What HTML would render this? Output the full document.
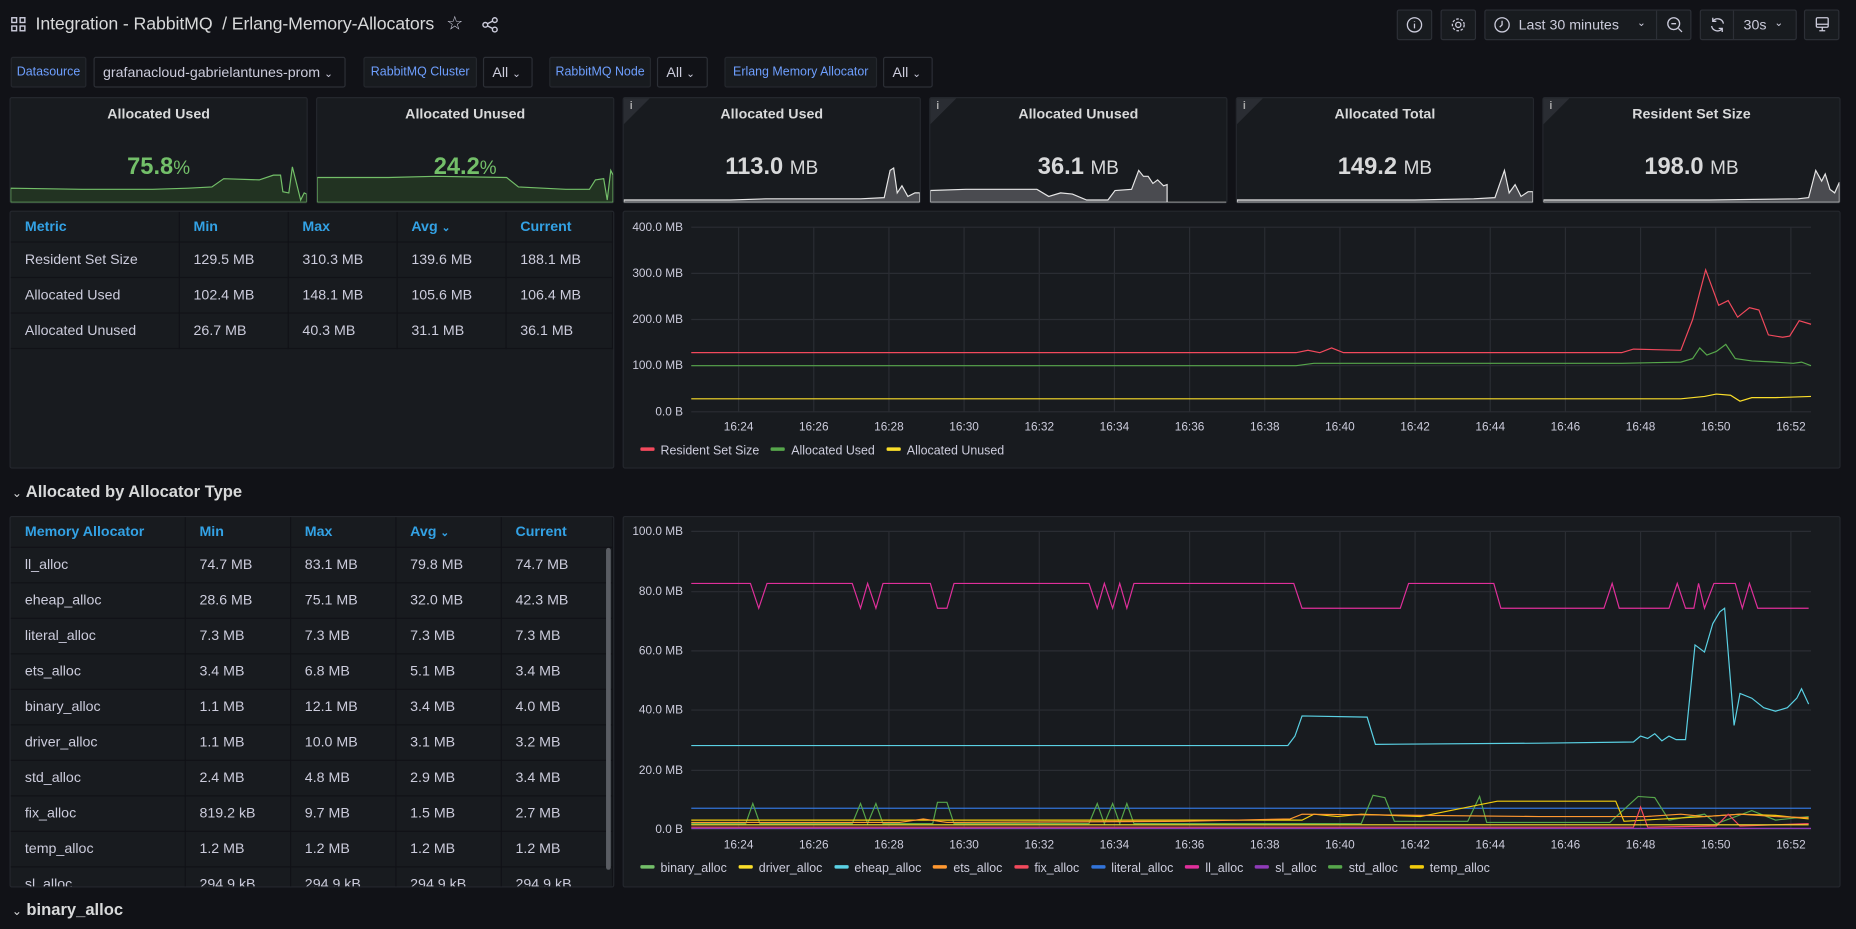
<!DOCTYPE html>
<html><head><meta charset="utf-8">
<style>
*{box-sizing:border-box;margin:0;padding:0}
html,body{width:1856px;height:929px;overflow:hidden;background:#111217}
.root{position:absolute;left:0;top:0;width:1568px;height:785px;transform:scale(1.18367,1.1834);transform-origin:0 0;font-family:"Liberation Sans",sans-serif;color:#ccccdc;font-size:12px}
.a{position:absolute}
.panel{position:absolute;background:#181b1f;border:1px solid #24272d;border-radius:2px}
.btn{position:absolute;top:8px;height:26px;background:#181b1f;border:1px solid #2c2f36;border-radius:2px}
.lab{position:absolute;top:48px;height:26px;background:#181b1f;border:1px solid #24272d;color:#6e9fff;font-size:10.5px;line-height:25px;text-align:center;border-radius:2px}
.dd{position:absolute;top:48px;height:26px;background:#111217;border:1px solid #2c2f36;color:#ccccdc;font-size:12px;line-height:25px;padding-left:7px;border-radius:2px}
.st{top:82px;height:90px}
.st .t{position:absolute;top:6px;left:0;right:0;text-align:center;font-weight:bold;font-size:12px;color:#d8d9da}
.st .v{position:absolute;top:47px;left:0;right:0;text-align:center;font-size:20px;font-weight:bold;color:#d8d9da}
.st .v small{font-size:16px;font-weight:normal}
.st svg{position:absolute;left:0;bottom:0}
.info{position:absolute;left:0;top:0;width:0;height:0;border-top:22px solid #2a2d33;border-right:22px solid transparent}
.info:after{content:"i";position:absolute;left:5px;top:-21px;font-size:9px;color:#aaa;font-weight:bold}
table{border-collapse:collapse;position:absolute;left:0;top:0;width:100%}
td,th{height:30px;padding-left:12px;text-align:left;font-size:12px;color:#ccccdc;font-weight:normal;border-right:1px solid #111217;border-bottom:1px solid #111217}
th{height:25px;color:#33a2e5;font-weight:bold;font-size:12px}
.row{position:absolute;left:10px;font-size:14px;font-weight:bold;color:#d8d9da}
.ax{font-size:10px;fill:#ccccdc;font-family:"Liberation Sans",sans-serif}
.leg{position:absolute;font-size:10.5px;color:#ccccdc;white-space:nowrap}
.leg i{display:inline-block;width:12px;height:3px;margin:0 5px 3px 0;vertical-align:middle;border-radius:1px}
.leg span{margin-right:10px}
</style></head><body><div class="root">

<!-- header -->
<svg class="a" style="left:9px;top:14px" width="13" height="13" viewBox="0 0 13 13" fill="none" stroke="#ccccdc" stroke-width="1.2"><rect x="1" y="1" width="4" height="4"/><rect x="8" y="1" width="4" height="4"/><rect x="1" y="8" width="4" height="4"/><rect x="8" y="8" width="4" height="4"/></svg>
<div class="a" style="left:30px;top:12px;font-size:15px;color:#d8d9da;letter-spacing:-0.1px">Integration - RabbitMQ&nbsp; / Erlang-Memory-Allocators</div>
<div class="a" style="left:377px;top:10px;font-size:16px;color:#ccccdc">☆</div>
<svg class="a" style="left:407px;top:14px" width="14" height="14" viewBox="0 0 14 14" fill="none" stroke="#ccccdc" stroke-width="1.2"><circle cx="11" cy="3" r="2"/><circle cx="3" cy="7" r="2"/><circle cx="11" cy="11" r="2"/><path d="M5 6l4-2M5 8l4 2"/></svg>

<div class="btn" style="left:1180px;width:30px"><svg style="position:absolute;left:7px;top:5px" width="14" height="14" viewBox="0 0 14 14" fill="none" stroke="#ccccdc" stroke-width="1.1"><circle cx="7" cy="7" r="6"/><path d="M7 6v4M7 4v.5"/></svg></div>
<div class="btn" style="left:1217px;width:30px"><svg style="position:absolute;left:7px;top:5px" width="14" height="14" viewBox="0 0 14 14" fill="none" stroke="#ccccdc" stroke-width="1.1"><circle cx="7" cy="7" r="2.2"/><circle cx="7" cy="7" r="5" stroke-dasharray="2.2 1.4"/></svg></div>
<div class="btn" style="left:1254px;width:175px"><svg style="position:absolute;left:7px;top:5px" width="14" height="14" viewBox="0 0 14 14" fill="none" stroke="#ccccdc" stroke-width="1.1"><circle cx="7" cy="7" r="6"/><path d="M7 3.5V7L5 9"/></svg><span style="position:absolute;left:28px;top:5px;font-size:12px">Last 30 minutes</span><span style="position:absolute;left:128px;top:5px;font-size:9px">⌄</span><div style="position:absolute;left:144px;top:0;width:1px;height:24px;background:#2c2f36"></div><svg style="position:absolute;left:153px;top:5px" width="14" height="14" viewBox="0 0 14 14" fill="none" stroke="#ccccdc" stroke-width="1.1"><circle cx="6" cy="6" r="5"/><path d="M4 6h4M10 10l3 3"/></svg></div>
<div class="btn" style="left:1436px;width:82px"><svg style="position:absolute;left:7px;top:5px" width="14" height="14" viewBox="0 0 14 14" fill="none" stroke="#ccccdc" stroke-width="1.1"><path d="M12 6A5 5 0 0 0 3 4M2 8a5 5 0 0 0 9 2M3 1v3h3M11 13v-3H8"/></svg><div style="position:absolute;left:27px;top:0;width:1px;height:24px;background:#2c2f36"></div><span style="position:absolute;left:36px;top:5px;font-size:12px">30s</span><span style="position:absolute;left:62px;top:5px;font-size:9px">⌄</span></div>
<div class="btn" style="left:1524px;width:30px"><svg style="position:absolute;left:8px;top:5px" width="13" height="14" viewBox="0 0 13 14" fill="none" stroke="#ccccdc" stroke-width="1.1"><rect x="1.5" y="1" width="10" height="8" rx="1"/><path d="M1.5 6.5h10M4 12h5M6.5 9v3"/></svg></div>

<!-- variables -->
<div class="lab" style="left:9px;width:64px">Datasource</div>
<div class="dd" style="left:79px;width:213px">grafanacloud-gabrielantunes-prom <span style="font-size:9px">⌄</span></div>
<div class="lab" style="left:307px;width:96px">RabbitMQ Cluster</div>
<div class="dd" style="left:408px;width:42px">All <span style="font-size:9px">⌄</span></div>
<div class="lab" style="left:464px;width:86px">RabbitMQ Node</div>
<div class="dd" style="left:555px;width:43px">All <span style="font-size:9px">⌄</span></div>
<div class="lab" style="left:612px;width:129px">Erlang Memory Allocator</div>
<div class="dd" style="left:746px;width:42px">All <span style="font-size:9px">⌄</span></div>

<!-- stat panels -->
<div class="panel st" style="left:8px;width:252px"><div class="t">Allocated Used</div><div class="v" style="color:#73bf69">75.8<small>%</small></div>
<svg width="250" height="32" viewBox="0 0 250 32"><path d="M0 20 L60 21 L120 21 L150 20 L170 19 L180 12 L210 13 L222 9 L228 9 L230 23 L235 24 L238 2 L242 18 L245 30 L248 24 L250 25 L250 32 L0 32Z" fill="#223322" stroke="#73bf69" stroke-width="1"/></svg></div>
<div class="panel st" style="left:267px;width:252px"><div class="info" style="display:none"></div><div class="t">Allocated Unused</div><div class="v" style="color:#73bf69">24.2<small>%</small></div>
<svg width="250" height="32" viewBox="0 0 250 32"><path d="M0 11 L60 11 L100 10 L160 11 L170 19 L210 21 L230 21 L235 13 L242 12 L245 30 L248 5 L250 9 L250 32 L0 32Z" fill="#223322" stroke="#73bf69" stroke-width="1"/></svg></div>
<div class="panel st" style="left:526px;width:252px"><div class="info"></div><div class="t">Allocated Used</div><div class="v">113.0 <small>MB</small></div>
<svg width="250" height="32" viewBox="0 0 250 32"><path d="M0 30 L90 30 L120 29 L200 29 L220 28 L225 5 L228 3 L231 24 L235 18 L240 27 L246 24 L250 24 L250 32 L0 32Z" fill="#4a4b50" stroke="#e6e6e6" stroke-width="1"/></svg></div>
<div class="panel st" style="left:785px;width:252px"><div class="info"></div><div class="t">Allocated Unused</div><div class="v">36.1 <small>MB</small></div>
<svg width="250" height="32" viewBox="0 0 250 32"><path d="M0 22 L30 21 L90 21 L100 27 L110 24 L120 25 L132 30 L150 30 L156 22 L170 21 L176 5 L180 10 L184 10 L188 16 L192 13 L197 18 L200 17 L200 32 L250 32 L0 32Z" fill="#4a4b50" stroke="#e6e6e6" stroke-width="1"/></svg></div>
<div class="panel st" style="left:1044px;width:252px"><div class="info"></div><div class="t">Allocated Total</div><div class="v">149.2 <small>MB</small></div>
<svg width="250" height="32" viewBox="0 0 250 32"><path d="M0 30 L150 30 L200 29 L218 28 L226 5 L230 24 L235 17 L240 27 L246 23 L250 23 L250 32 L0 32Z" fill="#4a4b50" stroke="#e6e6e6" stroke-width="1"/></svg></div>
<div class="panel st" style="left:1303px;width:252px"><div class="info"></div><div class="t">Resident Set Size</div><div class="v">198.0 <small>MB</small></div>
<svg width="250" height="32" viewBox="0 0 250 32"><path d="M0 30 L140 30 L215 29 L224 28 L230 5 L235 14 L238 8 L242 21 L246 24 L250 15 L250 32 L0 32Z" fill="#4a4b50" stroke="#e6e6e6" stroke-width="1"/></svg></div>

<!-- table 1 -->
<div class="panel" style="left:8px;top:178px;width:511px;height:218px;overflow:hidden">
<table><tr><th style="width:142px">Metric</th><th style="width:92px">Min</th><th style="width:92px">Max</th><th style="width:92px">Avg <span style="font-size:9px">⌄</span></th><th>Current</th></tr>
<tr><td>Resident Set Size</td><td>129.5 MB</td><td>310.3 MB</td><td>139.6 MB</td><td>188.1 MB</td></tr>
<tr><td>Allocated Used</td><td>102.4 MB</td><td>148.1 MB</td><td>105.6 MB</td><td>106.4 MB</td></tr>
<tr><td>Allocated Unused</td><td>26.7 MB</td><td>40.3 MB</td><td>31.1 MB</td><td>36.1 MB</td></tr></table></div>

<!-- graph 1 -->
<div class="panel" style="left:526px;top:178px;width:1029px;height:218px"></div>
<svg class="a" style="left:526px;top:178px" width="1029" height="218">
<g transform="translate(-526,-178)" stroke="#2a2d33" stroke-width="1">
<path d="M584 192H1530M584 231H1530M584 270H1530M584 309H1530M584 348H1530"/>
<path d="M624 192V348M687.5 192V348M751 192V348M814.5 192V348M878 192V348M941.5 192V348M1005 192V348M1068.5 192V348M1132 192V348M1195.5 192V348M1259 192V348M1322.5 192V348M1386 192V348M1449.5 192V348M1513 192V348"/>
</g>
<g transform="translate(-526,-178)" class="ax">
<text x="577" y="195" text-anchor="end">400.0 MB</text><text x="577" y="234" text-anchor="end">300.0 MB</text><text x="577" y="273" text-anchor="end">200.0 MB</text><text x="577" y="312" text-anchor="end">100.0 MB</text><text x="577" y="351" text-anchor="end">0.0 B</text>
<g text-anchor="middle"><text x="624" y="364">16:24</text><text x="687.5" y="364">16:26</text><text x="751" y="364">16:28</text><text x="814.5" y="364">16:30</text><text x="878" y="364">16:32</text><text x="941.5" y="364">16:34</text><text x="1005" y="364">16:36</text><text x="1068.5" y="364">16:38</text><text x="1132" y="364">16:40</text><text x="1195.5" y="364">16:42</text><text x="1259" y="364">16:44</text><text x="1322.5" y="364">16:46</text><text x="1386" y="364">16:48</text><text x="1449.5" y="364">16:50</text><text x="1513" y="364">16:52</text></g>
<polyline fill="none" stroke="#f2495c" stroke-width="1" points="584,298 1095,298 1105,296 1115,298 1125,294 1135,298 1370,298 1380,295 1420,296 1430,270 1441,228 1452,258 1460,254 1468,268 1478,260 1486,262 1494,283 1506,285 1512,284 1520,271 1530,274"/>
<polyline fill="none" stroke="#56a64b" stroke-width="1" points="584,309 1095,309 1110,307 1370,307 1420,306 1430,303 1436,294 1442,300 1450,297 1458,291 1466,303 1480,305 1500,306 1515,307 1522,306 1530,309"/>
<polyline fill="none" stroke="#fade2a" stroke-width="1" points="584,337 1420,337 1440,335 1450,333 1462,334 1470,339 1480,336 1500,336 1530,335"/>
</g></svg>
<div class="leg" style="left:541px;top:375px"><i style="background:#f2495c"></i><span>Resident Set Size</span><i style="background:#56a64b"></i><span>Allocated Used</span><i style="background:#fade2a"></i><span>Allocated Unused</span></div>

<!-- row -->
<div class="row" style="top:407px"><span style="font-size:10px;font-weight:normal">⌄</span> Allocated by Allocator Type</div>

<!-- table 2 -->
<div class="panel" style="left:8px;top:436px;width:511px;height:314px;overflow:hidden">
<table><tr><th style="width:147px">Memory Allocator</th><th style="width:89px">Min</th><th style="width:89px">Max</th><th style="width:89px">Avg <span style="font-size:9px">⌄</span></th><th>Current</th></tr>
<tr><td>ll_alloc</td><td>74.7 MB</td><td>83.1 MB</td><td>79.8 MB</td><td>74.7 MB</td></tr>
<tr><td>eheap_alloc</td><td>28.6 MB</td><td>75.1 MB</td><td>32.0 MB</td><td>42.3 MB</td></tr>
<tr><td>literal_alloc</td><td>7.3 MB</td><td>7.3 MB</td><td>7.3 MB</td><td>7.3 MB</td></tr>
<tr><td>ets_alloc</td><td>3.4 MB</td><td>6.8 MB</td><td>5.1 MB</td><td>3.4 MB</td></tr>
<tr><td>binary_alloc</td><td>1.1 MB</td><td>12.1 MB</td><td>3.4 MB</td><td>4.0 MB</td></tr>
<tr><td>driver_alloc</td><td>1.1 MB</td><td>10.0 MB</td><td>3.1 MB</td><td>3.2 MB</td></tr>
<tr><td>std_alloc</td><td>2.4 MB</td><td>4.8 MB</td><td>2.9 MB</td><td>3.4 MB</td></tr>
<tr><td>fix_alloc</td><td>819.2 kB</td><td>9.7 MB</td><td>1.5 MB</td><td>2.7 MB</td></tr>
<tr><td>temp_alloc</td><td>1.2 MB</td><td>1.2 MB</td><td>1.2 MB</td><td>1.2 MB</td></tr>
<tr><td>sl_alloc</td><td>294.9 kB</td><td>294.9 kB</td><td>294.9 kB</td><td>294.9 kB</td></tr></table>
<div style="position:absolute;left:503px;top:26px;width:4px;height:272px;background:#5a5d63;border-radius:2px"></div></div>

<!-- graph 2 -->
<div class="panel" style="left:526px;top:436px;width:1029px;height:314px"></div>
<svg class="a" style="left:526px;top:436px" width="1029" height="314">
<g transform="translate(-526,-436)" stroke="#2a2d33" stroke-width="1">
<path d="M584 449H1530M584 500H1530M584 550H1530M584 600H1530M584 651H1530M584 701H1530"/>
<path d="M624 449V701M687.5 449V701M751 449V701M814.5 449V701M878 449V701M941.5 449V701M1005 449V701M1068.5 449V701M1132 449V701M1195.5 449V701M1259 449V701M1322.5 449V701M1386 449V701M1449.5 449V701M1513 449V701"/>
</g>
<g transform="translate(-526,-436)" class="ax">
<text x="577" y="452" text-anchor="end">100.0 MB</text><text x="577" y="503" text-anchor="end">80.0 MB</text><text x="577" y="553" text-anchor="end">60.0 MB</text><text x="577" y="603" text-anchor="end">40.0 MB</text><text x="577" y="654" text-anchor="end">20.0 MB</text><text x="577" y="704" text-anchor="end">0.0 B</text>
<g text-anchor="middle"><text x="624" y="717">16:24</text><text x="687.5" y="717">16:26</text><text x="751" y="717">16:28</text><text x="814.5" y="717">16:30</text><text x="878" y="717">16:32</text><text x="941.5" y="717">16:34</text><text x="1005" y="717">16:36</text><text x="1068.5" y="717">16:38</text><text x="1132" y="717">16:40</text><text x="1195.5" y="717">16:42</text><text x="1259" y="717">16:44</text><text x="1322.5" y="717">16:46</text><text x="1386" y="717">16:48</text><text x="1449.5" y="717">16:50</text><text x="1513" y="717">16:52</text></g>
<polyline fill="none" stroke="#e02f9b" stroke-width="1" points="584,493 634,493 641,514 648,493 720,493 727,514 733,493 740,514 746,493 752,493 786,493 792,514 800,514 806,493 920,493 927,514 933,493 940,514 946,493 952,514 958,493 964,493 1093,493 1100,514 1183,514 1190,493 1262,493 1268,514 1355,514 1362,493 1368,514 1410,514 1417,493 1424,514 1431,514 1435,493 1440,514 1448,493 1466,493 1472,514 1478,493 1485,514 1528,514"/>
<polyline fill="none" stroke="#5ad1e4" stroke-width="1" points="584,630 1088,630 1094,622 1100,605 1155,606 1162,629 1300,628 1380,627 1386,622 1392,624 1398,620 1404,626 1410,622 1416,625 1424,625 1432,545 1440,551 1447,527 1453,517 1457,514 1465,613 1470,586 1480,590 1490,598 1500,601 1510,598 1518,590 1522,582 1528,595"/>
<polyline fill="none" stroke="#3274d9" stroke-width="1" points="584,683 1530,683"/>
<polyline fill="none" stroke="#56a64b" stroke-width="1" points="584,696 630,696 636,679 642,696 720,696 727,679 733,696 740,679 746,696 788,696 792,678 800,678 806,696 920,696 927,679 933,696 940,679 946,696 952,679 958,696 1150,696 1160,672 1170,674 1178,694 1240,694 1250,673 1256,695 1360,695 1384,673 1398,674 1410,693 1440,688 1450,696 1480,685 1500,693 1528,690"/>
<polyline fill="none" stroke="#f2cc0c" stroke-width="1" points="584,693 1100,693 1110,688 1130,690 1150,688 1200,690 1265,677 1365,677 1372,694 1440,690 1470,688 1500,689 1528,692"/>
<polyline fill="none" stroke="#ff9830" stroke-width="1" points="584,695 760,695 780,692 800,695 1000,694 1090,692 1100,688 1300,690 1390,690 1420,688 1440,690 1470,688 1500,690 1528,691"/>
<polyline fill="none" stroke="#f2495c" stroke-width="1" points="584,699 1380,699 1386,682 1392,699 1450,698 1460,688 1470,698 1528,696"/>
<polyline fill="none" stroke="#8f3bb8" stroke-width="1" points="584,700 1530,700"/>
<polyline fill="none" stroke="#fade2a" stroke-width="1" points="584,697 1528,697"/>
</g></svg>
<div class="leg" style="left:541px;top:728px"><i style="background:#73bf69"></i><span>binary_alloc</span><i style="background:#fade2a"></i><span>driver_alloc</span><i style="background:#5ad1e4"></i><span>eheap_alloc</span><i style="background:#ff9830"></i><span>ets_alloc</span><i style="background:#f2495c"></i><span>fix_alloc</span><i style="background:#3274d9"></i><span>literal_alloc</span><i style="background:#e02f9b"></i><span>ll_alloc</span><i style="background:#8f3bb8"></i><span>sl_alloc</span><i style="background:#56a64b"></i><span>std_alloc</span><i style="background:#f2cc0c"></i><span>temp_alloc</span></div>

<div class="row" style="top:760px"><span style="font-size:10px;font-weight:normal">⌄</span> binary_alloc</div>
</div></body></html>
